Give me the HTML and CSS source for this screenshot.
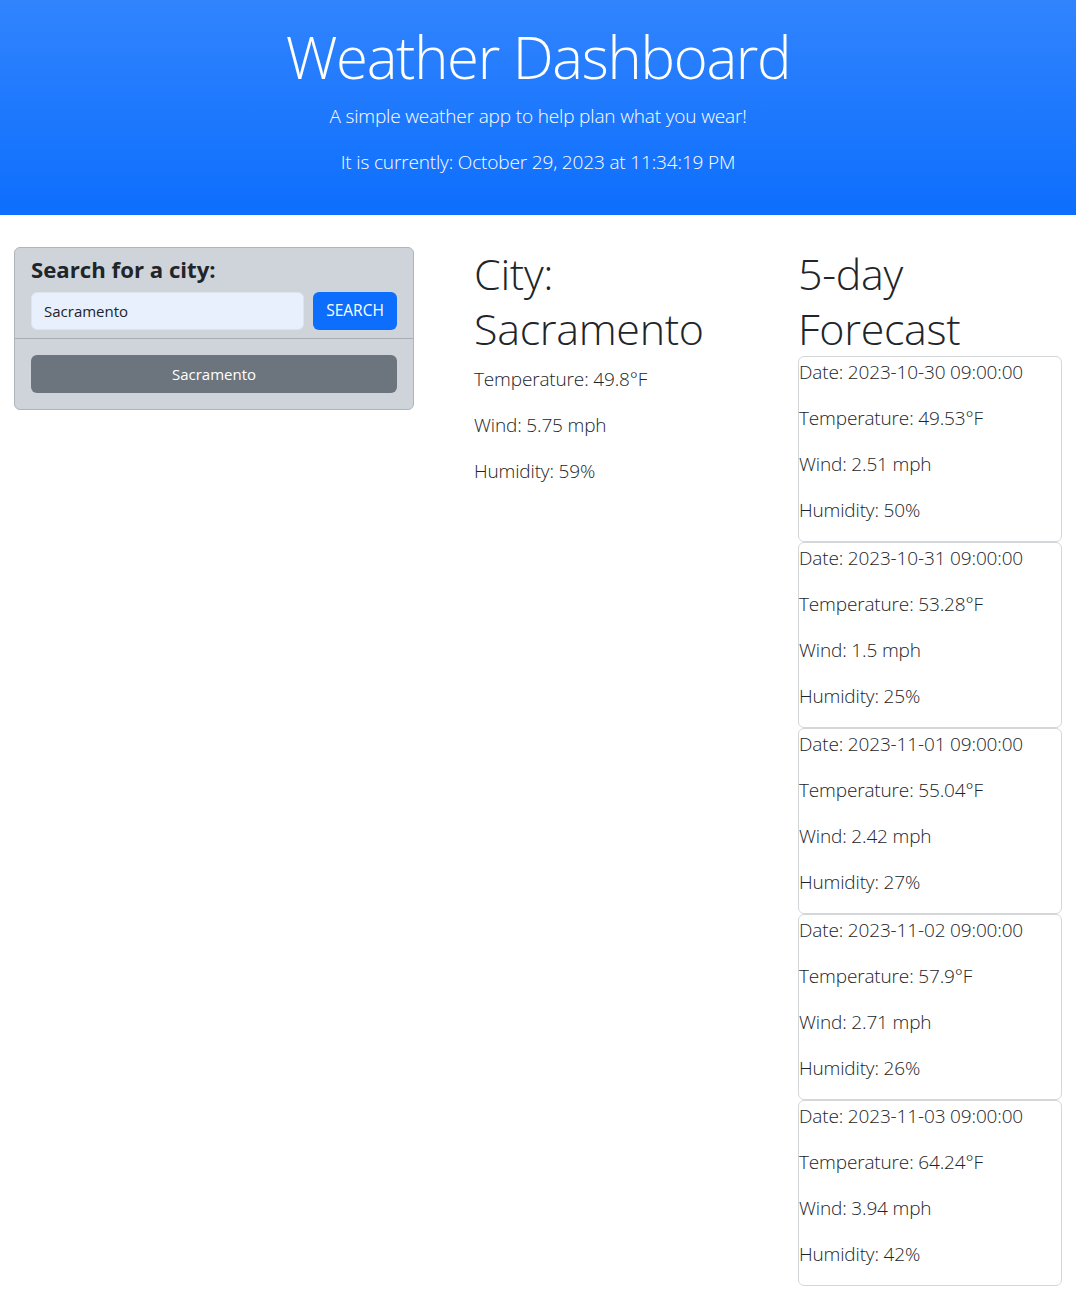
FILE: index.html
```html
<!DOCTYPE html>
<html lang="en">
<head>
<meta charset="utf-8">
<title>Weather Dashboard</title>
<link rel="stylesheet" href="styles.css">
</head>
<body>
<header class="hero">
  <h1 class="hero-title">Weather Dashboard</h1>
  <p class="lead">A simple weather app to help plan what you wear!</p>
  <p class="lead">It is currently: October 29, 2023 at 11:34:19 PM</p>
</header>
<main class="content">
  <aside class="sidebar">
    <section class="search-card">
      <div class="search-head">
        <h2 class="search-title">Search for a city:</h2>
        <form class="search-form">
          <input class="search-input" type="text" value="Sacramento">
          <button class="btn btn-primary" type="button">SEARCH</button>
        </form>
      </div>
      <div class="search-body">
        <button class="btn btn-history" type="button">Sacramento</button>
      </div>
    </section>
  </aside>
  <section class="current">
    <h2 class="display-5 city-title">City: Sacramento</h2>
    <p class="lead">Temperature: 49.8°F</p>
    <p class="lead">Wind: 5.75 mph</p>
    <p class="lead">Humidity: 59%</p>
  </section>
  <section class="forecast">
    <h2 class="display-5 forecast-title">5-day Forecast</h2>
    <div class="day-card">
      <p class="lead">Date: 2023-10-30 09:00:00</p>
      <p class="lead">Temperature: 49.53°F</p>
      <p class="lead">Wind: 2.51 mph</p>
      <p class="lead">Humidity: 50%</p>
    </div>
    <div class="day-card">
      <p class="lead">Date: 2023-10-31 09:00:00</p>
      <p class="lead">Temperature: 53.28°F</p>
      <p class="lead">Wind: 1.5 mph</p>
      <p class="lead">Humidity: 25%</p>
    </div>
    <div class="day-card">
      <p class="lead">Date: 2023-11-01 09:00:00</p>
      <p class="lead">Temperature: 55.04°F</p>
      <p class="lead">Wind: 2.42 mph</p>
      <p class="lead">Humidity: 27%</p>
    </div>
    <div class="day-card">
      <p class="lead">Date: 2023-11-02 09:00:00</p>
      <p class="lead">Temperature: 57.9°F</p>
      <p class="lead">Wind: 2.71 mph</p>
      <p class="lead">Humidity: 26%</p>
    </div>
    <div class="day-card">
      <p class="lead">Date: 2023-11-03 09:00:00</p>
      <p class="lead">Temperature: 64.24°F</p>
      <p class="lead">Wind: 3.94 mph</p>
      <p class="lead">Humidity: 42%</p>
    </div>
  </section>
</main>
</body>
</html>
```

FILE: styles.css
```css
* { box-sizing: border-box; }

body {
  margin: 0;
  font-family: "Open Sans", "Noto Sans", sans-serif;
  font-size: 16px;
  line-height: 1.5;
  color: #212529;
  background: #fff;
}

.lead {
  font-size: 19px;
  font-weight: 300;
  letter-spacing: -0.15px;
  line-height: 30px;
  margin: 0 0 16px;
}

.hero {
  background: linear-gradient(180deg, #3184fd 0%, #0d6efd 100%);
  color: #fff;
  text-align: center;
  padding: 21px 12px 22px;
}

.hero-title {
  font-size: 58px;
  font-weight: 300;
  letter-spacing: -1.3px;
  line-height: 72px;
  margin: 0 0 8px;
}

.content {
  display: flex;
  align-items: flex-start;
  padding: 32px 14px 0;
}

.sidebar { width: 400px; flex: none; }

.search-card {
  background: #ced4da;
  border: 1px solid #adb5bd;
  border-radius: 6px;
}

.search-head {
  padding: 8px 16px;
  border-bottom: 1px solid #a7adb4;
}

.search-title {
  margin: 0 0 8px;
  font-size: 22.2px;
  line-height: 28px;
  font-weight: 700;
}

.search-form {
  display: flex;
  gap: 9px;
  margin: 0;
}

.search-input {
  flex: 1;
  min-width: 0;
  height: 38px;
  padding: 6px 12px;
  font: inherit;
  font-size: 15px;
  color: #212529;
  background: #e8f0fe;
  border: 1px solid #dfe4ea;
  border-radius: 6px;
}

.btn {
  height: 38px;
  padding: 6px 12px;
  font: inherit;
  font-size: 15px;
  color: #fff;
  border: 1px solid transparent;
  border-radius: 6px;
}

.btn-primary { background: #0d6efd; width: 84px; flex: none; font-size: 15.5px; }

.search-body { padding: 16px; }

.btn-history {
  display: block;
  width: 100%;
  background: #6c757d;
}

.current {
  width: 324px;
  flex: none;
  margin-left: 60px;
  padding-right: 24px;
}

.display-5 {
  font-size: 43px;
  font-weight: 300;
  letter-spacing: -0.3px;
  line-height: 54.5px;
}

.city-title { margin: 0 0 8px; }

.forecast { width: 264px; flex: none; }

.forecast-title { margin: 0; }

.day-card {
  border: 1px solid #d4d7da;
  border-radius: 6px;
}
```
